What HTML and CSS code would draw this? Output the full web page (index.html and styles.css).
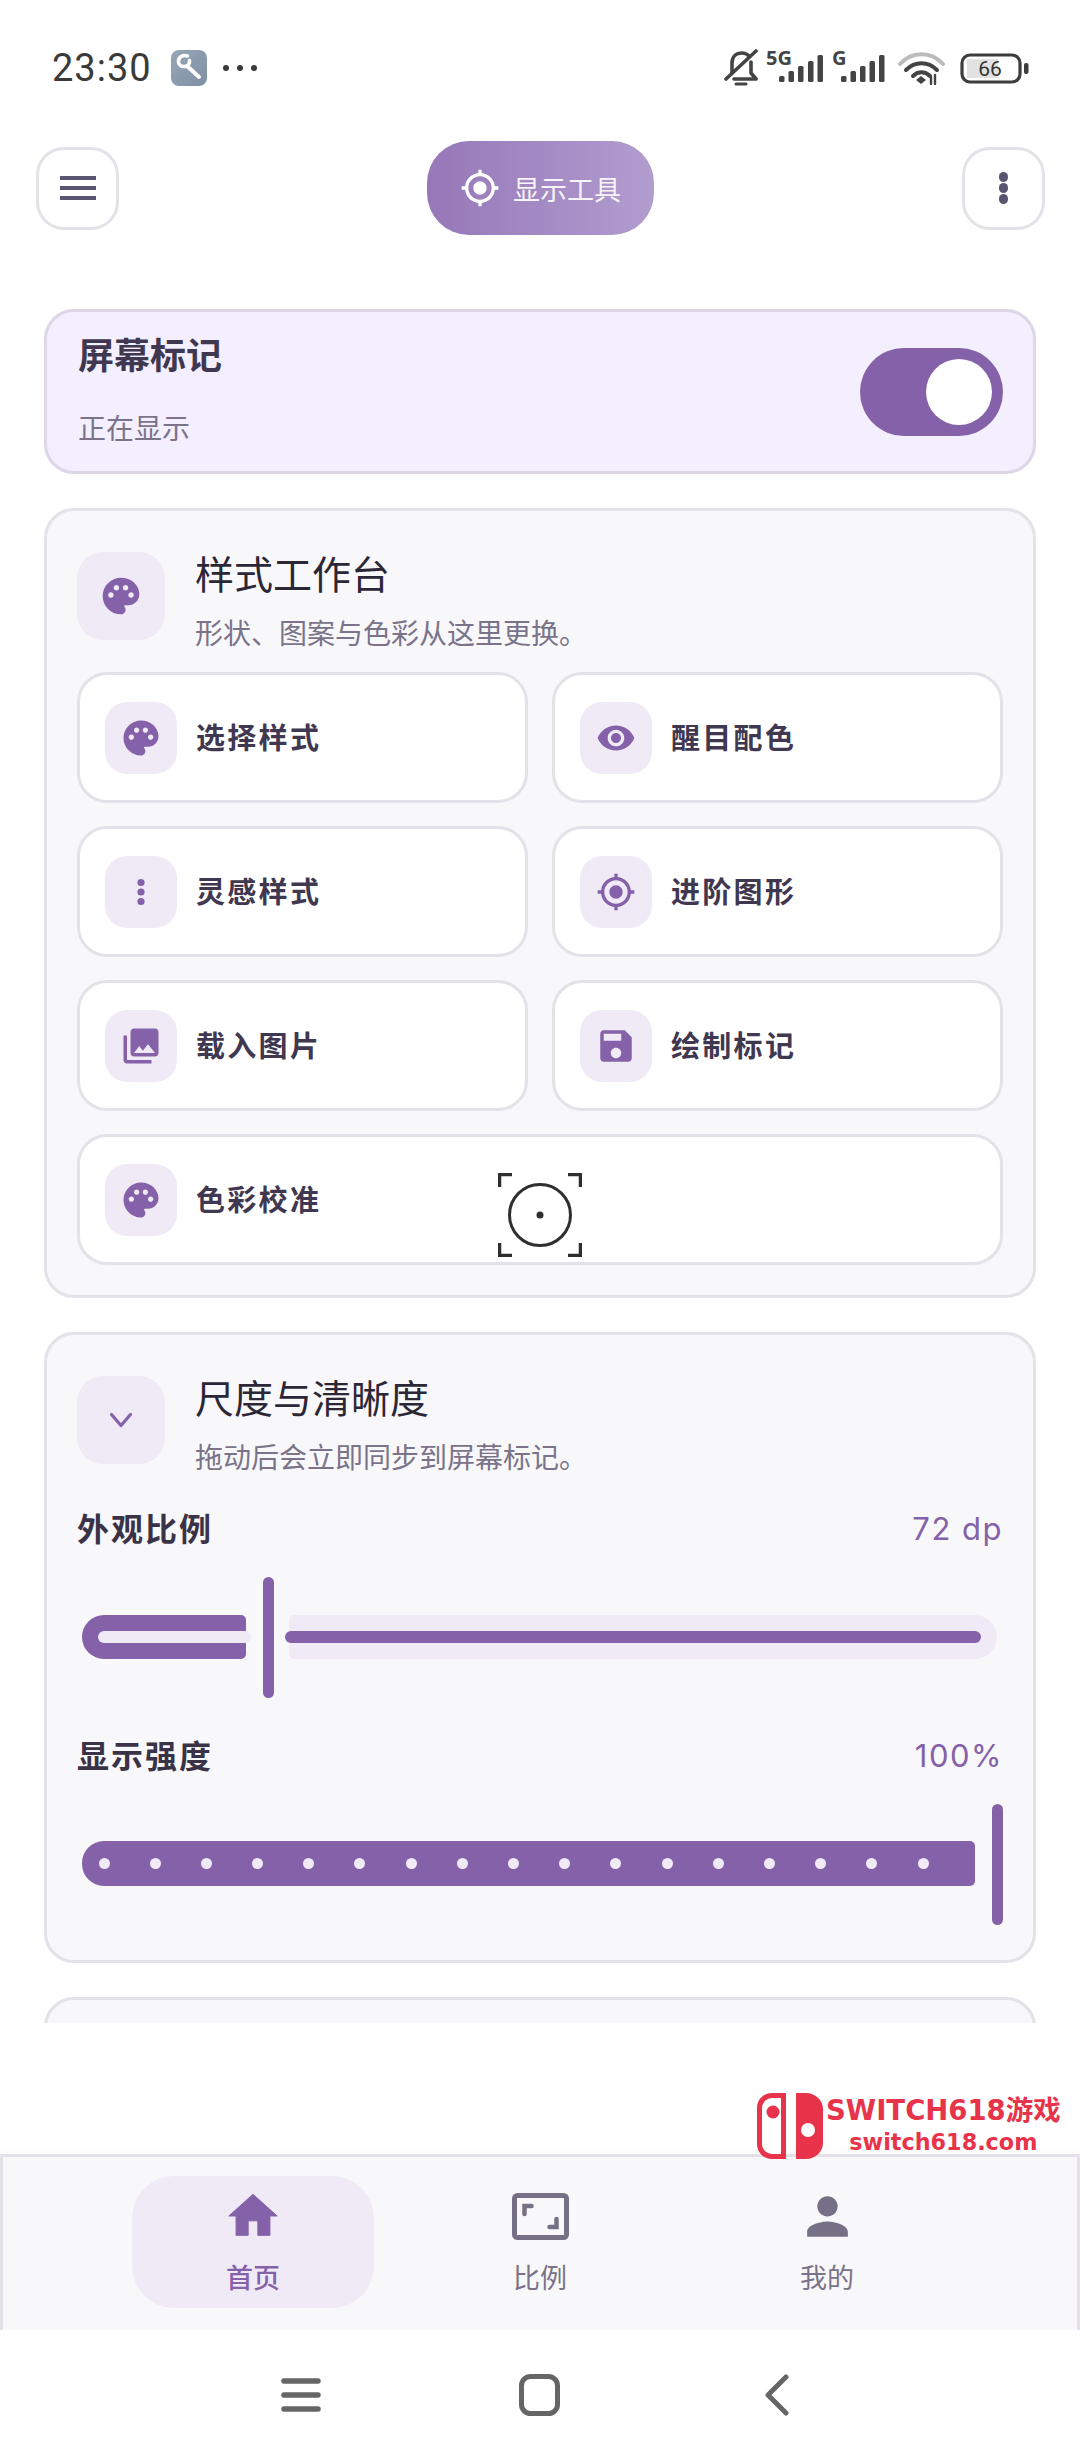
FILE: index.html
```html
<!DOCTYPE html>
<html lang="zh-CN">
<head>
<meta charset="utf-8">
<title>显示工具</title>
<link rel="stylesheet" href="styles.css">
</head>
<body>
<div class="page">
  <header class="status">
    <span class="time">23:30</span>
    <span class="app-tile"><svg viewBox="0 0 36 36" width="36" height="36" fill="none" stroke="#fff" stroke-linecap="round" stroke-linejoin="round"><path d="M16 16L28 27" stroke-width="4"/><path d="M16.500 6C12 4.500 7 7 7.500 12C8 16 12 17.500 16 16C18 14.500 19 12.500 18.500 10.500" stroke-width="3.500"/></svg></span>
    <span class="more-dots"><i></i><i></i><i></i></span>
    <span class="status-right">
      <svg class="s-bell" viewBox="0 0 34 38" width="34" height="38" fill="none" stroke="#444" stroke-width="3.600" stroke-linecap="round" stroke-linejoin="round"><path d="M8 24V14C8 8 12 4 18 4c3 0 5 1 7 3"/><path d="M27 13v11l5 6H10"/><path d="M2 30L32 2"/><path d="M12 35h10" stroke-width="3"/></svg>
      <svg class="s-sig s-sig-first" viewBox="0 0 60 42" width="60" height="42"><text x="2" y="22" class="sig-text">5G</text><g fill="#444"><rect x="15" y="33" width="5.500" height="6" rx="1.500"/><rect x="24.500" y="28" width="5.500" height="11" rx="1.500"/><rect x="34" y="23" width="5.500" height="16" rx="1.500"/><rect x="44" y="18" width="5.500" height="21" rx="1.500"/><rect x="53.500" y="12" width="5.500" height="27" rx="1.500"/></g></svg>
      <svg class="s-sig" viewBox="0 0 53 42" width="53" height="42"><text x="0" y="22" class="sig-text">G</text><g fill="#444"><rect x="9" y="33" width="5.500" height="6" rx="1.500"/><rect x="18.500" y="28" width="5.500" height="11" rx="1.500"/><rect x="28" y="23" width="5.500" height="16" rx="1.500"/><rect x="37.500" y="18" width="5.500" height="21" rx="1.500"/><rect x="47" y="12" width="5.500" height="27" rx="1.500"/></g></svg>
      <svg class="s-wifi" viewBox="0 0 47 34" width="47" height="34" fill="none" stroke-linecap="round"><path d="M2 13C14 0 33 0 45 13" stroke="#bbb" stroke-width="4"/><path d="M8 19c9-9 22-9 31 0" stroke="#444" stroke-width="4"/><path d="M15 25c5-5 12-5 17 0" stroke="#444" stroke-width="4"/><path d="M23 25l5 4-5 4-5-4z" fill="#444"/><path d="M33 33v-7M37 33v-9" stroke="#444" stroke-width="2.400"/></svg>
      <svg class="s-batt" viewBox="0 0 69 31" width="69" height="31"><rect x="7" y="6" width="31" height="19" fill="#e2e2e2"/><rect x="2" y="2" width="58" height="27" rx="8" fill="none" stroke="#3d3d3d" stroke-width="3.200"/><rect x="64" y="10" width="4.500" height="11" rx="2" fill="#3d3d3d"/><text x="30" y="23" class="batt-text">66</text></svg>
    </span>
  </header>

  <div class="topbar">
    <button class="square-btn"><span class="bars"><i></i><i></i><i></i></span></button>
    <button class="title-pill">
      <svg viewBox="0 0 24 24" width="40" height="40"><path fill="#fff" d="M12 8c-2.210 0-4 1.790-4 4s1.790 4 4 4 4-1.790 4-4-1.790-4-4-4zm8.940 3c-.46-4.170-3.770-7.480-7.940-7.940V1h-2v2.060C6.830 3.520 3.520 6.830 3.060 11H1v2h2.060c.46 4.170 3.770 7.480 7.940 7.940V23h2v-2.060c4.170-.46 7.480-3.770 7.940-7.940H23v-2h-2.060zM12 19c-3.870 0-7-3.130-7-7s3.130-7 7-7 7 3.130 7 7-3.130 7-7 7z"/></svg>
      <span>显示工具</span>
    </button>
    <button class="square-btn"><span class="vdots"><i></i><i></i><i></i></span></button>
  </div>

  <main class="content">
    <section class="banner">
      <div class="banner-text">
        <h2>屏幕标记</h2>
        <p>正在显示</p>
      </div>
      <div class="toggle"><span class="toggle-thumb"></span></div>
    </section>

    <section class="card card-tools">
      <div class="card-head">
        <span class="tile tile-lg"><svg class="ic" viewBox="0 0 24 24" width="44" height="44"><use href="#palette"/></svg></span>
        <div>
          <h3>样式工作台</h3>
          <p>形状、图案与色彩从这里更换。</p>
        </div>
      </div>
      <div class="tool-grid">
        <div class="tool"><span class="tile"><svg class="ic" viewBox="0 0 24 24" width="42" height="42"><use href="#palette"/></svg></span><b>选择样式</b></div>
        <div class="tool"><span class="tile"><svg class="ic" viewBox="0 0 24 24" width="40" height="40"><path d="M12 4.500C7 4.500 2.730 7.610 1 12c1.730 4.390 6 7.500 11 7.500s9.270-3.110 11-7.500c-1.730-4.390-6-7.500-11-7.500zM12 17c-2.760 0-5-2.240-5-5s2.240-5 5-5 5 2.240 5 5-2.240 5-5 5zm0-8c-1.660 0-3 1.340-3 3s1.340 3 3 3 3-1.340 3-3-1.340-3-3-3z"/></svg></span><b>醒目配色</b></div>
        <div class="tool"><span class="tile"><svg class="ic" viewBox="0 0 40 40" width="40" height="40"><circle cx="20" cy="10.500" r="3.600"/><circle cx="20" cy="20" r="3.600"/><circle cx="20" cy="29.500" r="3.600"/></svg></span><b>灵感样式</b></div>
        <div class="tool"><span class="tile"><svg class="ic" viewBox="0 0 24 24" width="40" height="40"><path d="M12 8c-2.210 0-4 1.790-4 4s1.790 4 4 4 4-1.790 4-4-1.790-4-4-4zm8.940 3c-.46-4.170-3.770-7.480-7.940-7.940V1h-2v2.060C6.830 3.520 3.520 6.830 3.060 11H1v2h2.060c.46 4.170 3.770 7.480 7.940 7.940V23h2v-2.060c4.170-.46 7.480-3.770 7.940-7.940H23v-2h-2.060zM12 19c-3.870 0-7-3.130-7-7s3.130-7 7-7 7 3.130 7 7-3.130 7-7 7z"/></svg></span><b>进阶图形</b></div>
        <div class="tool"><span class="tile"><svg class="ic" viewBox="0 0 24 24" width="42" height="42"><path d="M22 16V4c0-1.100-.9-2-2-2H8c-1.100 0-2 .9-2 2v12c0 1.100.9 2 2 2h12c1.100 0 2-.9 2-2zm-11-4l2.030 2.710L16 11l4 5H8l3-4zM2 6v14c0 1.100.9 2 2 2h14v-2H4V6H2z"/></svg></span><b>载入图片</b></div>
        <div class="tool"><span class="tile"><svg class="ic" viewBox="0 0 24 24" width="42" height="42"><path d="M17 3H5c-1.110 0-2 .9-2 2v14c0 1.100.89 2 2 2h14c1.100 0 2-.9 2-2V7l-4-4zm-5 16c-1.660 0-3-1.340-3-3s1.340-3 3-3 3 1.340 3 3-1.340 3-3 3zm3-10H5V5h10v4z"/></svg></span><b>绘制标记</b></div>
        <div class="tool tool-wide"><span class="tile"><svg class="ic" viewBox="0 0 24 24" width="42" height="42"><use href="#palette"/></svg></span><b>色彩校准</b></div>
      </div>
    </section>

    <section class="card card-scale">
      <div class="card-head">
        <span class="tile tile-lg"><svg viewBox="0 0 24 16" width="24" height="16" fill="none" stroke="#8461a8" stroke-width="3.200" stroke-linecap="round" stroke-linejoin="round"><path d="M2.500 2.500L12 13.500l9.500-11"/></svg></span>
        <div>
          <h3>尺度与清晰度</h3>
          <p>拖动后会立即同步到屏幕标记。</p>
        </div>
      </div>
      <div class="row-label row-first"><b>外观比例</b><span>72 dp</span></div>
      <div class="slider">
        <div class="seg seg-on seg-short"><i class="stripe stripe-light"></i></div>
        <span class="thumb"></span>
        <div class="seg seg-off"><i class="stripe stripe-dark"></i></div>
      </div>
      <div class="row-label row-second"><b>显示强度</b><span>100%</span></div>
      <div class="slider slider-full">
        <div class="seg seg-on seg-dots">
          <i></i><i></i><i></i><i></i><i></i><i></i><i></i><i></i><i></i><i></i><i></i><i></i><i></i><i></i><i></i><i></i><i></i>
        </div>
        <span class="thumb"></span>
      </div>
    </section>

    <section class="card card-next"></section>
  </main>

  <div class="spacer"></div>

  <nav class="tabs">
    <div class="tab tab-active">
      <span class="tab-icon"><svg viewBox="0 0 24 24" width="58" height="58" fill="#8461a8" stroke="#8461a8" stroke-width=".4" stroke-linejoin="round"><path d="M10 20v-6h4v6h5v-8h3L12 3 2 12h3v8z"/></svg></span>
      <span class="tab-label">首页</span>
    </div>
    <div class="tab">
      <span class="tab-icon"><svg viewBox="0 0 57 47" width="57" height="47" fill="none" stroke="#757085" stroke-width="5" stroke-linecap="round"><rect x="2.500" y="2.500" width="52" height="42" rx="3"/><path d="M12.500 21v-8h7M44.500 26v8h-7" stroke-width="4.500"/></svg></span>
      <span class="tab-label">比例</span>
    </div>
    <div class="tab">
      <span class="tab-icon"><svg viewBox="0 0 24 24" width="61" height="61" fill="#757085"><path d="M12 12c2.210 0 4-1.790 4-4s-1.790-4-4-4-4 1.790-4 4 1.790 4 4 4zm0 2c-2.670 0-8 1.340-8 4v2h16v-2c0-2.660-5.330-4-8-4z"/></svg></span>
      <span class="tab-label">我的</span>
    </div>
  </nav>

  <footer class="gesture">
    <svg class="g-menu" viewBox="0 0 40 36" width="40" height="36" fill="none" stroke="#666" stroke-width="5.500" stroke-linecap="round"><path d="M3 4h34M3 18h34M3 32h34"/></svg>
    <svg class="g-home" viewBox="0 0 41 42" width="41" height="42" fill="none" stroke="#666" stroke-width="5"><rect x="2.500" y="2.500" width="36" height="37" rx="9"/></svg>
    <svg class="g-back" viewBox="0 0 25 42" width="25" height="42" fill="none" stroke="#666" stroke-width="5" stroke-linecap="round" stroke-linejoin="round"><path d="M22 3L4 21l18 18"/></svg>
  </footer>

  <svg class="target" viewBox="0 0 84 84" width="84" height="84" fill="none" stroke="#2f2f2f" stroke-width="3"><circle cx="42" cy="42" r="30.500"/><circle cx="42" cy="42" r="3.500" fill="#2f2f2f" stroke="none"/><path d="M1.500 14V1.500H14M70 1.500h12.500V14M1.500 70v12.500H14M70 82.500h12.500V70" stroke-width="3.500"/></svg>

  <div class="watermark">
    <svg viewBox="0 0 66 66" width="66" height="66"><path d="M26.500 2.500H15C8 2.500 2.500 8 2.500 15v36C2.500 58 8 63.500 15 63.500h11.500z" fill="#fff" stroke="#e8344a" stroke-width="5"/><circle cx="16" cy="19" r="6.500" fill="#e8344a"/><path d="M39 0h10c9 0 17 7 17 16v34c0 9-8 16-17 16H39z" fill="#e8344a"/><circle cx="51" cy="37" r="7" fill="#fff"/></svg>
    <div class="wm-text">
      <span class="wm-top">SWITCH618游戏</span>
      <span class="wm-bottom">switch618.com</span>
    </div>
  </div>

  <svg class="defs" width="0" height="0"><defs><path id="palette" d="M12 2C6.490 2 2 6.490 2 12s4.490 10 10 10c1.380 0 2.500-1.120 2.500-2.500 0-.61-.23-1.200-.64-1.670-.08-.1-.13-.21-.13-.33 0-.28.22-.5.5-.5H16c3.310 0 6-2.690 6-6 0-4.960-4.490-9-10-9zm5.500 11c-.83 0-1.500-.67-1.500-1.500s.67-1.500 1.500-1.500 1.500.67 1.500 1.500-.67 1.500-1.500 1.500zm-3-4c-.83 0-1.500-.67-1.500-1.500S13.670 6 14.500 6s1.500.67 1.500 1.500S15.330 9 14.500 9zM5 11.500c0-.83.67-1.500 1.500-1.500s1.500.67 1.500 1.500S7.330 13 6.500 13 5 12.330 5 11.500zm6-4c0 .83-.67 1.500-1.500 1.500S8 8.330 8 7.500 8.670 6 9.500 6s1.500.67 1.500 1.500z"/></defs></svg>
</div>
</body>
</html>
```

FILE: styles.css
```css
* { box-sizing: border-box; margin: 0; padding: 0; }
html, body { width: 1080px; height: 2460px; background: #fff; overflow: hidden; }
body { font-family: "Noto Sans CJK SC", "Noto Sans", sans-serif; color: #332d41; }
i { display: block; font-style: normal; }
button { font-family: inherit; background: none; border: 0; }

.page { position: relative; width: 1080px; height: 2460px; display: flex; flex-direction: column; background: #fff; }

/* Status bar */
.status { height: 136px; flex: none; display: flex; align-items: center; padding: 0 51px 0 52px; }
.time { width: 119px; flex: none; font-family: Roboto, sans-serif; font-size: 38px; font-weight: 400; letter-spacing: 1px; color: #3a3a3a; line-height: 1; }
.app-tile { width: 36px; height: 36px; flex: none; border-radius: 8px; background: linear-gradient(135deg, #98a6b6, #7e90a5); display: flex; align-items: center; justify-content: center; }
.more-dots { display: flex; gap: 8px; margin-left: 16px; }
.more-dots i { width: 6px; height: 6px; border-radius: 50%; background: #3a3a3a; }
.status-right { margin-left: auto; display: flex; align-items: center; }
.status-right svg { display: block; flex: none; }
.s-sig { margin-left: 8px; margin-bottom: 8px; }
.s-sig-first { margin-left: 6px; }
.s-wifi { margin-left: 13px; }
.s-batt { margin-left: 15px; }
.sig-text { font-family: "Open Sans", sans-serif; font-weight: 700; font-size: 20px; fill: #444; }
.batt-text { font-family: Roboto, sans-serif; font-size: 21px; fill: #333; text-anchor: middle; }

/* Top bar */
.topbar { height: 104px; flex: none; display: flex; align-items: center; justify-content: space-between; padding: 0 35px 0 36px; }
.square-btn { width: 83px; height: 83px; border: 3px solid #e4e2e8; border-radius: 28px; background: #fff; display: flex; align-items: center; justify-content: center; }
.bars { display: flex; flex-direction: column; gap: 6px; }
.bars i { width: 36px; height: 4px; background: #5b5470; }
.vdots { display: flex; flex-direction: column; gap: 1.500px; }
.vdots i { width: 9.500px; height: 9.500px; border-radius: 50%; background: #5b5470; }
.title-pill { width: 227px; height: 94px; border-radius: 42px; background: linear-gradient(90deg, #9677b8, #b29dcf); display: flex; align-items: center; justify-content: center; gap: 13px; color: rgba(255, 255, 255, .92); font-size: 27px; }

/* Scrolling content */
.content { height: 1783px; flex: none; overflow: hidden; padding: 69px 44px 0; display: flex; flex-direction: column; gap: 34px; }
.banner { flex: none; height: 165px; border: 3px solid #dcd6e6; border-radius: 30px; background: #f4efff; padding: 0 30px 0 31px; display: flex; align-items: center; justify-content: space-between; }
.banner h2 { font-size: 36px; font-weight: 700; line-height: 48px; color: #3f3850; margin-bottom: 30px; }
.banner p { font-size: 28px; line-height: 40px; color: #7a7389; }
.banner-text { margin-bottom: 8px; }
.toggle { width: 143px; height: 88px; border-radius: 44px; background: #8461a8; display: flex; align-items: center; justify-content: flex-end; padding-right: 11px; }
.toggle-thumb { width: 66px; height: 66px; border-radius: 50%; background: #fff; }

.card { flex: none; border: 3px solid #e4e2e8; border-radius: 30px; background: #f8f8fb; padding: 41px 30px 30px; }
.card-next { height: 80px; }
.card-head { display: flex; gap: 30px; align-items: flex-start; }
.card-head h3 { font-size: 39px; font-weight: 400; line-height: 46px; margin-top: -3px; color: #2c2736; }
.card-head p { font-size: 28px; line-height: 40px; margin-top: 16.500px; color: #7a7389; }
.tile { width: 72px; height: 72px; flex: none; border-radius: 22px; background: #f0eaf7; display: flex; align-items: center; justify-content: center; }
.tile-lg { width: 88px; height: 88px; border-radius: 26px; }
.ic { fill: #8461a8; display: block; }

.tool-grid { display: grid; grid-template-columns: 1fr 1fr; gap: 23px 24px; margin-top: 20.500px; }
.tool { height: 131px; border: 3px solid #e4e2e8; border-radius: 30px; background: #fff; padding: 0 25px; display: flex; align-items: center; gap: 19px; }
.tool b { font-size: 29px; font-weight: 700; letter-spacing: 2.300px; color: #3f3850; margin-bottom: 3px; }
.tool-wide { grid-column: 1 / 3; }

/* Sliders */
.row-label { display: flex; justify-content: space-between; align-items: center; height: 44px; }
.row-label b { font-size: 32px; font-weight: 700; letter-spacing: 2px; color: #3a3347; margin-bottom: 2px; }
.row-label span { font-family: Inter, sans-serif; font-size: 31px; letter-spacing: 1.500px; color: #8461a8; }
.row-first { margin-top: 30.500px; }
.row-second { margin-top: 35px; }
.slider { height: 121px; margin-top: 27px; padding: 0 6px 0 5px; display: flex; align-items: center; }
.slider-full { margin-top: 26.500px; margin-bottom: 5px; padding-right: 0; }
.seg { position: relative; height: 44px; margin-bottom: 2px; }
.seg-on { background: #8461a8; border-radius: 22px 5px 5px 22px; }
.seg-short { width: 164px; flex: none; }
.seg-off { flex: 1; margin-left: 15px; background: #f0eaf7; border-radius: 5px 22px 22px 5px; }
.thumb { width: 11px; height: 121px; flex: none; margin-left: 17px; border-radius: 6px; background: #8461a8; }
.stripe { position: absolute; top: 16px; height: 12px; border-radius: 6px; }
.stripe-light { left: 16px; right: -5px; background: #f0eaf7; }
.stripe-dark { left: -4px; right: 16px; background: #8461a8; }
.seg-dots { flex: 1; height: 45px; display: flex; align-items: center; gap: 40.200px; padding-left: 16.500px; }
.seg-dots i { width: 11px; height: 11px; flex: none; border-radius: 50%; background: #f0eaf7; }

.spacer { flex: 1; }

/* Bottom navigation */
.tabs { height: 176px; flex: none; border: 3px solid #e4e2e8; border-bottom: 0; background: #f8f8fb; box-shadow: 0 -4px 8px rgba(0, 0, 0, .015); padding-top: 19px; display: flex; justify-content: center; gap: 45px; }
.tab { width: 242px; height: 132px; border-radius: 42px; padding-top: 10px; display: flex; flex-direction: column; align-items: center; color: #7a7389; }
.tab-active { background: #f0eaf7; color: #8461a8; font-weight: 500; }
.tab-icon { height: 60px; display: flex; align-items: center; justify-content: center; }
.tab-label { font-size: 27px; line-height: 40px; margin-top: 11px; }

/* Gesture bar */
.gesture { height: 130px; flex: none; background: #fff; display: flex; align-items: center; padding-left: 281px; gap: 198px; }
.g-back { margin-left: 6px; }

/* Floating pieces */
.target { position: absolute; left: 498px; top: 1173px; }
.watermark { position: absolute; left: 757px; top: 2093px; display: flex; gap: 3px; }
.wm-text { display: flex; flex-direction: column; align-items: center; color: #e8344a; font-family: "DejaVu Sans", "Noto Sans CJK SC", sans-serif; font-weight: 700; }
.wm-top { font-size: 27.500px; line-height: 34px; white-space: nowrap; }
.wm-bottom { font-size: 22.300px; line-height: 30px; white-space: nowrap; }
.defs { position: absolute; }
```
